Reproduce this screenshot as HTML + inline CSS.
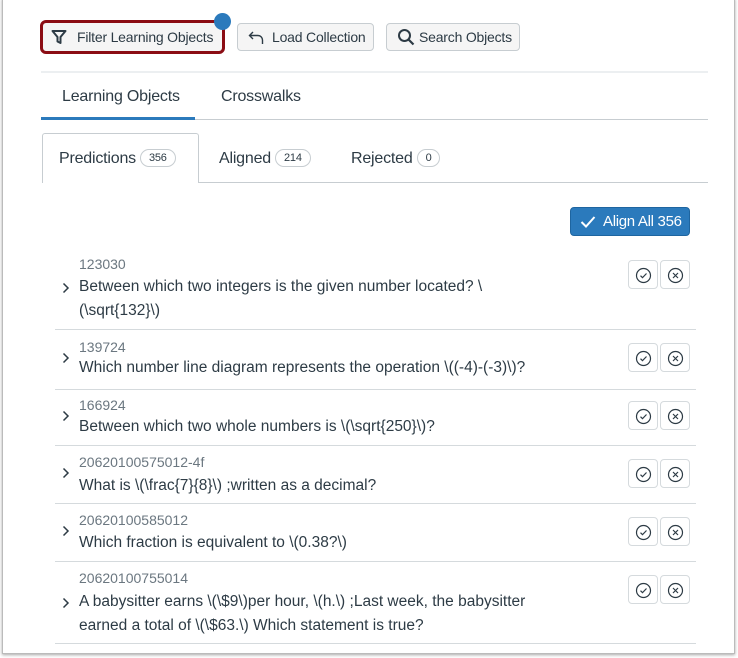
<!DOCTYPE html>
<html><head><meta charset="utf-8"><style>
*{box-sizing:border-box;margin:0;padding:0}
body{width:738px;height:658px;background:#fff;font-family:"Liberation Sans",sans-serif;color:#2d3b45;position:relative;overflow:hidden}
.frame{position:absolute;left:2px;top:-2px;width:733px;height:656px;border:1px solid #bbb;box-shadow:0 1px 3px rgba(0,0,0,.35)}
.a{position:absolute;white-space:nowrap}
.btn{position:absolute;top:23px;height:28px;background:#f5f5f5;border:1px solid #c7cdd1;border-radius:4px;font-size:14px;line-height:26px;padding-left:34px;letter-spacing:-.2px}
.btn svg{position:absolute;left:10px;top:6px}
.hl{position:absolute;height:1px;background:#d5dadd}
.pill{display:inline-block;border:1px solid #c7cdd1;border-radius:10px;font-size:11px;line-height:16px;padding:0 8px;margin-left:4px;vertical-align:2px;color:#2d3b45}
.tab{font-size:16px;letter-spacing:-.2px}
.id{font-size:14px;color:#6b7780;letter-spacing:0}
.q{font-size:15.5px;letter-spacing:0;line-height:24px}
.chev{position:absolute;left:61px}
.ib{position:absolute;width:30px;height:29px;border:1px solid #d5dadd;border-radius:4px;background:#fff}
.ib svg{position:absolute;left:6px;top:6px}
</style></head><body>
<div class="frame"></div>
<div class="btn" style="left:40px;width:185px;border:3px solid #8b0d14;border-radius:6px;top:20px;height:34px;line-height:28px;padding-left:34px;background:#f5f5f5">
<svg width="16" height="16" viewBox="0 0 16 16" style="left:8px;top:6px"><path d="M1.5 2h13L9.5 8v6l-3-1.5V8z" fill="none" stroke="#2d3b45" stroke-width="2" stroke-linejoin="round"/></svg>Filter Learning Objects</div>
<div class="a" style="left:214px;top:13px;width:17px;height:17px;border-radius:50%;background:#2b7abc"></div>
<div class="btn" style="left:237px;width:137px"><svg width="16" height="16" viewBox="0 0 16 16"><path d="M5 2L1.5 5.5 5 9M1.5 5.5H10a4.5 4.5 0 0 1 4.5 4.5V14" fill="none" stroke="#2d3b45" stroke-width="1.4"/></svg>Load Collection</div>
<div class="btn" style="left:386px;width:134px;padding-left:32px"><svg width="18" height="18" viewBox="0 0 18 18" style="top:4px"><circle cx="7.5" cy="7.5" r="5.5" fill="none" stroke="#2d3b45" stroke-width="2"/><path d="M11.5 11.5l5 5" stroke="#2d3b45" stroke-width="2.2"/></svg>Search Objects</div>
<div class="hl" style="left:41px;top:71px;width:667px;height:2px;background:#eceff1"></div>
<div class="a tab" style="left:62px;top:88px">Learning Objects</div>
<div class="a tab" style="left:221px;top:88px">Crosswalks</div>
<div class="hl" style="left:41px;top:119px;width:667px;background:#c7cdd1"></div>
<div class="a" style="left:41px;top:117px;width:154px;height:3px;background:#2b7abc"></div>
<div class="a" style="left:42px;top:133px;width:157px;height:50px;border:1px solid #c7cdd1;border-bottom:none;background:#fff;border-radius:3px 3px 0 0"></div>
<div class="hl" style="left:199px;top:182px;width:509px;background:#c7cdd1"></div>
<div class="a tab" style="left:59px;top:149px">Predictions<span class="pill">356</span></div>
<div class="a tab" style="left:219px;top:149px">Aligned<span class="pill">214</span></div>
<div class="a tab" style="left:351px;top:149px">Rejected<span class="pill">0</span></div>
<div class="a" style="left:570px;top:207px;width:120px;height:29px;background:#2b7abc;border:1px solid #1e65a0;border-radius:4px;color:#fff;font-size:15px;line-height:27px;padding-left:32px;letter-spacing:-.3px"><svg width="16" height="14" viewBox="0 0 16 14" style="position:absolute;left:9px;top:7px"><path d="M1.5 7l4.5 4.5L14.5 2" fill="none" stroke="#fff" stroke-width="2"/></svg>Align All 356</div>

<div class="a id" style="left:79px;top:256px">123030</div>
<div class="a q" style="left:79px;top:275px">Between which two integers is the given number located? \<br>(\sqrt{132}\)</div>
<div class="hl" style="left:55px;top:329px;width:641px"></div>
<div class="a id" style="left:79px;top:339px">139724</div>
<div class="a q" style="left:79px;top:356px">Which number line diagram represents the operation \((-4)-(-3)\)?</div>
<div class="hl" style="left:55px;top:389px;width:641px"></div>
<div class="a id" style="left:79px;top:397px">166924</div>
<div class="a q" style="left:79px;top:415px">Between which two whole numbers is \(\sqrt{250}\)?</div>
<div class="hl" style="left:55px;top:445px;width:641px"></div>
<div class="a id" style="left:79px;top:454px">20620100575012-4f</div>
<div class="a q" style="left:79px;top:474px">What is \(\frac{7}{8}\) ;written as a decimal?</div>
<div class="hl" style="left:55px;top:503px;width:641px"></div>
<div class="a id" style="left:79px;top:512px">20620100585012</div>
<div class="a q" style="left:79px;top:531px">Which fraction is equivalent to \(0.38?\)</div>
<div class="hl" style="left:55px;top:561px;width:641px"></div>
<div class="a id" style="left:79px;top:570px">20620100755014</div>
<div class="a q" style="left:79px;top:590px">A babysitter earns \(\$9\)per hour, \(h.\) ;Last week, the babysitter<br>earned a total of \(\$63.\) Which statement is true?</div>
<div class="hl" style="left:55px;top:643px;width:641px"></div>

<svg class="chev" style="top:281px" width="10" height="14" viewBox="0 0 10 14"><path d="M2.5 2.5l4.5 4.5-4.5 4.5" fill="none" stroke="#2d3b45" stroke-width="1.5"/></svg>
<svg class="chev" style="top:351px" width="10" height="14" viewBox="0 0 10 14"><path d="M2.5 2.5l4.5 4.5-4.5 4.5" fill="none" stroke="#2d3b45" stroke-width="1.5"/></svg>
<svg class="chev" style="top:409px" width="10" height="14" viewBox="0 0 10 14"><path d="M2.5 2.5l4.5 4.5-4.5 4.5" fill="none" stroke="#2d3b45" stroke-width="1.5"/></svg>
<svg class="chev" style="top:466px" width="10" height="14" viewBox="0 0 10 14"><path d="M2.5 2.5l4.5 4.5-4.5 4.5" fill="none" stroke="#2d3b45" stroke-width="1.5"/></svg>
<svg class="chev" style="top:524px" width="10" height="14" viewBox="0 0 10 14"><path d="M2.5 2.5l4.5 4.5-4.5 4.5" fill="none" stroke="#2d3b45" stroke-width="1.5"/></svg>
<svg class="chev" style="top:596px" width="10" height="14" viewBox="0 0 10 14"><path d="M2.5 2.5l4.5 4.5-4.5 4.5" fill="none" stroke="#2d3b45" stroke-width="1.5"/></svg>

<div class="ib" style="left:628px;top:260px"><svg width="17" height="17" viewBox="0 0 17 17"><circle cx="8.5" cy="8.5" r="7" fill="none" stroke="#2d3b45" stroke-width="1.2"/><path d="M5.5 8.7l2 2 4-4.2" fill="none" stroke="#2d3b45" stroke-width="1.2"/></svg></div>
<div class="ib" style="left:660px;top:260px"><svg width="17" height="17" viewBox="0 0 17 17"><circle cx="8.5" cy="8.5" r="7" fill="none" stroke="#2d3b45" stroke-width="1.2"/><path d="M6 6l5 5M11 6l-5 5" stroke="#2d3b45" stroke-width="1.2"/></svg></div>
<div class="ib" style="left:628px;top:343px"><svg width="17" height="17" viewBox="0 0 17 17"><circle cx="8.5" cy="8.5" r="7" fill="none" stroke="#2d3b45" stroke-width="1.2"/><path d="M5.5 8.7l2 2 4-4.2" fill="none" stroke="#2d3b45" stroke-width="1.2"/></svg></div>
<div class="ib" style="left:660px;top:343px"><svg width="17" height="17" viewBox="0 0 17 17"><circle cx="8.5" cy="8.5" r="7" fill="none" stroke="#2d3b45" stroke-width="1.2"/><path d="M6 6l5 5M11 6l-5 5" stroke="#2d3b45" stroke-width="1.2"/></svg></div>
<div class="ib" style="left:628px;top:401px"><svg width="17" height="17" viewBox="0 0 17 17"><circle cx="8.5" cy="8.5" r="7" fill="none" stroke="#2d3b45" stroke-width="1.2"/><path d="M5.5 8.7l2 2 4-4.2" fill="none" stroke="#2d3b45" stroke-width="1.2"/></svg></div>
<div class="ib" style="left:660px;top:401px"><svg width="17" height="17" viewBox="0 0 17 17"><circle cx="8.5" cy="8.5" r="7" fill="none" stroke="#2d3b45" stroke-width="1.2"/><path d="M6 6l5 5M11 6l-5 5" stroke="#2d3b45" stroke-width="1.2"/></svg></div>
<div class="ib" style="left:628px;top:459px"><svg width="17" height="17" viewBox="0 0 17 17"><circle cx="8.5" cy="8.5" r="7" fill="none" stroke="#2d3b45" stroke-width="1.2"/><path d="M5.5 8.7l2 2 4-4.2" fill="none" stroke="#2d3b45" stroke-width="1.2"/></svg></div>
<div class="ib" style="left:660px;top:459px"><svg width="17" height="17" viewBox="0 0 17 17"><circle cx="8.5" cy="8.5" r="7" fill="none" stroke="#2d3b45" stroke-width="1.2"/><path d="M6 6l5 5M11 6l-5 5" stroke="#2d3b45" stroke-width="1.2"/></svg></div>
<div class="ib" style="left:628px;top:517px"><svg width="17" height="17" viewBox="0 0 17 17"><circle cx="8.5" cy="8.5" r="7" fill="none" stroke="#2d3b45" stroke-width="1.2"/><path d="M5.5 8.7l2 2 4-4.2" fill="none" stroke="#2d3b45" stroke-width="1.2"/></svg></div>
<div class="ib" style="left:660px;top:517px"><svg width="17" height="17" viewBox="0 0 17 17"><circle cx="8.5" cy="8.5" r="7" fill="none" stroke="#2d3b45" stroke-width="1.2"/><path d="M6 6l5 5M11 6l-5 5" stroke="#2d3b45" stroke-width="1.2"/></svg></div>
<div class="ib" style="left:628px;top:575px"><svg width="17" height="17" viewBox="0 0 17 17"><circle cx="8.5" cy="8.5" r="7" fill="none" stroke="#2d3b45" stroke-width="1.2"/><path d="M5.5 8.7l2 2 4-4.2" fill="none" stroke="#2d3b45" stroke-width="1.2"/></svg></div>
<div class="ib" style="left:660px;top:575px"><svg width="17" height="17" viewBox="0 0 17 17"><circle cx="8.5" cy="8.5" r="7" fill="none" stroke="#2d3b45" stroke-width="1.2"/><path d="M6 6l5 5M11 6l-5 5" stroke="#2d3b45" stroke-width="1.2"/></svg></div>
</body></html>
